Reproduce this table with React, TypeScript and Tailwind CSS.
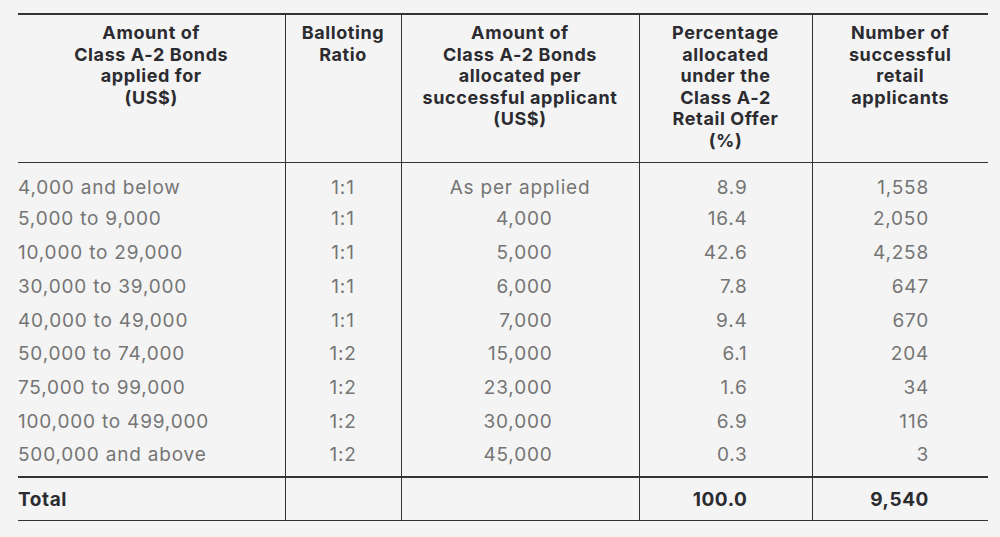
import React from "react";

const rows = [
  ["4,000 and below", "1:1", "As per applied", "8.9", "1,558"],
  ["5,000 to 9,000", "1:1", "4,000", "16.4", "2,050"],
  ["10,000 to 29,000", "1:1", "5,000", "42.6", "4,258"],
  ["30,000 to 39,000", "1:1", "6,000", "7.8", "647"],
  ["40,000 to 49,000", "1:1", "7,000", "9.4", "670"],
  ["50,000 to 74,000", "1:2", "15,000", "6.1", "204"],
  ["75,000 to 99,000", "1:2", "23,000", "1.6", "34"],
  ["100,000 to 499,000", "1:2", "30,000", "6.9", "116"],
  ["500,000 and above", "1:2", "45,000", "0.3", "3"],
];

export default function App() {
  return (
    <div className="min-h-[537px] w-[1000px] bg-[#f4f4f4] pt-[13px] pl-[18px] font-['Inter','Liberation_Sans',sans-serif]">
      <table className="w-[970px] table-fixed border-collapse">
        <colgroup>
          <col className="w-[267px]" />
          <col className="w-[116px]" />
          <col className="w-[238px]" />
          <col className="w-[173px]" />
          <col className="w-[176px]" />
        </colgroup>
        <thead>
          <tr className="h-[148px] border-t-2 border-b border-[#333] align-top text-[18px] font-bold leading-[21.5px] text-[#2b2b30] tracking-[0.6px]">
            <th className="pt-[7px] text-center">
              Amount of<br />Class A-2 Bonds<br />applied for<br />(US$)
            </th>
            <th className="border-l border-[#333] pt-[7px] text-center">
              Balloting<br />Ratio
            </th>
            <th className="border-l border-[#333] pt-[7px] text-center">
              Amount of<br />Class A-2 Bonds<br />allocated per<br />successful applicant<br />(US$)
            </th>
            <th className="border-l border-[#333] pt-[7px] text-center">
              Percentage<br />allocated<br />under the<br />Class A-2<br />Retail Offer<br />(%)
            </th>
            <th className="border-l border-[#333] pt-[7px] text-center">
              Number of<br />successful<br />retail<br />applicants
            </th>
          </tr>
        </thead>
        <tbody className="text-[19px] leading-[23px] tracking-[0.8px] text-[#757575]">
          {rows.map((r, i) => (
            <tr
              key={i}
              className={
                i === 0 ? "h-[40px] align-bottom" : i === rows.length - 1 ? "h-[39px] align-top" : "h-[33.75px]"
              }
            >
              <td className={i === 0 ? "pb-[3px]" : i === rows.length - 1 ? "pt-[5px]" : ""}>{r[0]}</td>
              <td className={"border-l border-[#333] text-center " + (i === 0 ? "pb-[3px]" : i === rows.length - 1 ? "pt-[5px]" : "")}>{r[1]}</td>
              <td
                className={
                  (i === 0 ? "text-center pb-[3px] " : "pr-[86px] text-right ") +
                  "border-l border-[#333] " +
                  (i === rows.length - 1 ? "pt-[5px]" : "")
                }
              >
                {r[2]}
              </td>
              <td className={"border-l border-[#333] pr-[64px] text-right " + (i === 0 ? "pb-[3px]" : i === rows.length - 1 ? "pt-[5px]" : "")}>{r[3]}</td>
              <td className={"border-l border-[#333] pr-[59px] text-right " + (i === 0 ? "pb-[3px]" : i === rows.length - 1 ? "pt-[5px]" : "")}>{r[4]}</td>
            </tr>
          ))}
          <tr className="h-[43px] border-t-2 border-b border-[#333] text-[19px] font-bold tracking-[0.6px] text-[#2b2b30]">
            <td>Total</td>
            <td className="border-l border-[#333]"></td>
            <td className="border-l border-[#333]"></td>
            <td className="border-l border-[#333] pr-[64px] text-right">100.0</td>
            <td className="border-l border-[#333] pr-[59px] text-right">9,540</td>
          </tr>
        </tbody>
      </table>
    </div>
  );
}
